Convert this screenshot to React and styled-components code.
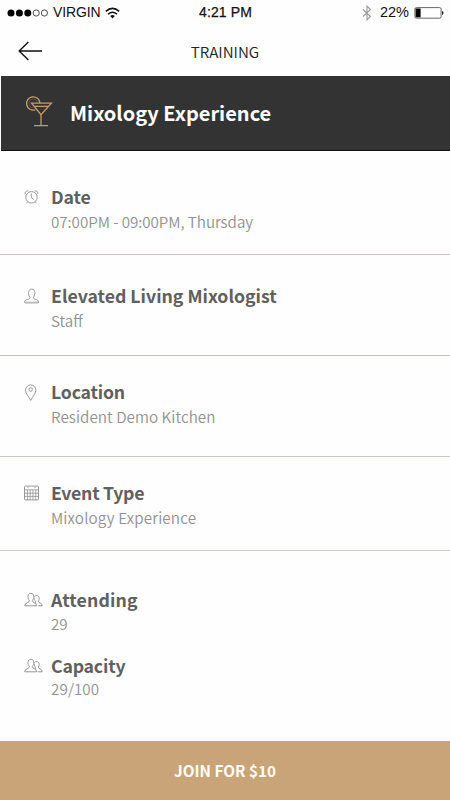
import React from 'react';
import styled, { createGlobalStyle } from 'styled-components';

const GlobalStyle = createGlobalStyle`
  * { box-sizing: border-box; }
  body { margin: 0; background: #fefefe; }
`;

const Screen = styled.main`
  display: flex;
  flex-direction: column;
  width: 450px;
  height: 800px;
  overflow: hidden;
  background: #fefefe;
  font-family: "Noto Sans CJK SC", "Noto Sans", sans-serif;
  svg { display: block; flex: none; }
`;

const StatusBar = styled.header`
  display: grid;
  grid-template-columns: 1fr auto 1fr;
  align-items: center;
  height: 25px;
  padding: 0 6px 0 7px;
  color: #111;
  font: 14px/25px "Liberation Sans", sans-serif;
`;

const StatusGroup = styled.div`
  display: flex;
  align-items: center;
  justify-content: ${(p) => (p.$end ? 'flex-end' : 'flex-start')};
  gap: ${(p) => p.$gap}px;
`;

const Carrier = styled.span`
  letter-spacing: -0.1px;
`;

const Clock = styled.time`
  letter-spacing: 0.1px;
  -webkit-text-stroke: 0.25px #111;
`;

const Percent = styled.span`
  font-size: 14.5px;
  margin: 0 5px 0 8px;
`;

const NavBar = styled.nav`
  display: grid;
  grid-template-columns: 1fr auto 1fr;
  align-items: center;
  height: 51px;
  padding: 0 18px;
`;

const BackButton = styled.button`
  justify-self: start;
  padding: 0;
  border: 0;
  background: none;
`;

const NavTitle = styled.h1`
  margin: 0;
  color: #222;
  font-size: 15.2px;
  font-weight: 350;
  line-height: 24px;
`;

const Banner = styled.section`
  display: flex;
  align-items: center;
  height: 75px;
  margin-left: 1px;
  padding-left: 24px;
  gap: 17px;
  background: #333;
  border-bottom: 1px solid #111;
`;

const BannerTitle = styled.h2`
  margin: 0;
  color: #fff;
  font-size: 20px;
  font-weight: 700;
  line-height: 30px;
`;

const Section = styled.section`
  display: flex;
  flex-direction: column;
  gap: 17px;
  height: ${(p) => p.$height}px;
  padding-top: ${(p) => p.$top}px;
  border-bottom: ${(p) => (p.$line ? `1px solid ${p.$line}` : '0')};
`;

const Row = styled.div`
  display: grid;
  grid-template-columns: 51px 1fr;
`;

const IconSlot = styled.div`
  padding: 5px 0 0 23px;
`;

const Label = styled.h3`
  margin: 0;
  color: #606060;
  font-size: 17.7px;
  font-weight: 700;
  line-height: 26px;
  letter-spacing: ${(p) => p.$tracking || 0}px;
`;

const Value = styled.p`
  margin: 0;
  color: #929292;
  font-size: 15.2px;
  font-weight: 350;
  line-height: ${(p) => (p.$compact ? 23 : 24)}px;
  margin-top: ${(p) => (p.$compact ? -0.5 : 0)}px;
  letter-spacing: ${(p) => p.$tracking || 0}px;
`;

const JoinButton = styled.button`
  flex: none;
  height: 59px;
  margin-top: auto;
  padding: 0 0 2px;
  border: 0;
  background: #c8a478;
  color: #fffdf8;
  font: 700 15.3px/24px "Noto Sans CJK SC", "Noto Sans", sans-serif;
`;

const lineProps = { fill: 'none', stroke: '#8c8c8c', strokeWidth: 0.9, strokeLinejoin: 'round' };

const SignalDots = () => (
  <svg width="42" height="10" viewBox="0 0 42 10">
    {[4, 12.4, 20.8, 29.2, 37.4].map((x, i) => (
      <circle key={x} cx={x} cy="5" r={i < 3 ? 3.5 : 3.1} fill={i < 3 ? '#000' : 'none'} stroke={i < 3 ? 'none' : '#222'} strokeWidth="0.8" />
    ))}
  </svg>
);

const WifiIcon = () => (
  <svg width="15" height="12" viewBox="0 0 15 12">
    <path d="M0.8 4.4Q7.5-1.6 14.2 4.4M3 7.2Q7.5 3.2 12 7.2" fill="none" stroke="#111" strokeWidth="1.5" />
    <path d="M5.2 9Q7.5 7.2 9.8 9L7.5 11.4z" fill="#111" />
  </svg>
);

const BluetoothIcon = () => (
  <svg width="10" height="16" viewBox="0 0 10 16">
    <path d="M1 4.5L8.5 11.5 5 14.8V1.2L8.5 4.5 1 11.5" fill="none" stroke="#999" strokeWidth="1.1" />
  </svg>
);

const BatteryIcon = () => (
  <svg width="30" height="12" viewBox="0 0 30 12">
    <rect x="0.9" y="0.6" width="26.2" height="10.6" rx="1.5" fill="#fff" stroke="#555" strokeWidth="0.9" />
    <rect x="1.6" y="1.5" width="5" height="8.8" fill="#000" />
    <path d="M28 4Q29.5 4.3 29.5 5.9T28 7.9z" fill="#222" />
  </svg>
);

const BackArrow = () => (
  <svg width="25" height="20" viewBox="0 0 25 20">
    <path d="M24 10H1.5M10.4 1L1.2 10l9.2 9" fill="none" stroke="#111" strokeWidth="1.4" />
  </svg>
);

const CocktailIcon = () => (
  <svg width="28" height="34" viewBox="0 0 28 34" fill="none" stroke="#c69c66" strokeWidth="1.3">
    <path d="M10.3 13.9A6.7 6.7 0 1 1 15 7M6.6 7.2H26.4L16 18.7ZM9.5 10.3H23.5M16 18.5V29.6M9 29.6H23" />
    <path d="M8.3 11.4A4.2 4.2 0 1 1 12.3 6.4" strokeWidth="0.7" opacity="0.4" />
  </svg>
);

const AlarmIcon = () => (
  <svg width="17" height="17" viewBox="0 0 17 17" {...lineProps}>
    <circle cx="8.5" cy="9.3" r="5.7" />
    <path d="M8.3 5.6V9.5L10.8 11.5M4.7 13.7L3.6 15.2M12.3 13.7l1.1 1.5M2.2 6C1.5 4.2 3.5 2.4 5.3 3M14.8 6C15.5 4.2 13.5 2.4 11.7 3" />
  </svg>
);

const PersonIcon = () => (
  <svg width="17" height="17" viewBox="0 0 17 17" {...lineProps}>
    <path d="M7 10.2C4.9 8.2 4.6 2.1 8.7 2.1S12.5 8.2 10.4 10.2C9.9 13.1 15.6 11.5 15.6 15.2Q15.6 15.9 15 15.9H2.2Q1.6 15.9 1.6 15.2C1.6 11.5 7.5 13.1 7 10.2Z" />
    <path d="M1.8 14.7H15.4" strokeWidth="0.5" opacity="0.6" />
  </svg>
);

const PinIcon = () => (
  <svg width="17" height="18" viewBox="0 0 17 18" {...lineProps}>
    <path d="M7.7 17.4C5.8 13.2 2.5 10.8 2.5 7.1A5.2 5.2 0 0 1 12.9 7.1C12.9 10.8 9.6 13.2 7.7 17.4Z" />
    <circle cx="7.7" cy="6.5" r="1.8" />
  </svg>
);

const CalendarIcon = () => (
  <svg width="17" height="17" viewBox="0 0 17 17" {...lineProps}>
    <rect x="1.5" y="2.1" width="14" height="13.8" rx="1" />
    <path d="M1.5 5.8H15.5M1.5 9.2H15.5M1.5 12.4H15.5M4.4 5.8V15.9M7.2 5.8V15.9M10 5.8V15.9M12.8 5.8V15.9M5 2.8V4.2M12 2.8V4.2" strokeWidth="0.75" />
  </svg>
);

const PeopleIcon = () => (
  <svg width="21" height="17" viewBox="0 0 21 17" {...lineProps}>
    <path d="M6.4 9.4C4.3 7.4 4.2 2.3 7.9 2.3S11.5 7.4 9.4 9.4C9 12.2 13.7 11.1 13.7 14.8H1.7C1.7 11.1 6.8 12.2 6.4 9.4Z" />
    <path d="M11.3 5.5C14.2 3.1 17.8 5.7 15.4 10.2C15.2 12.4 19.2 11.4 19.2 14.8H14.9M12.4 12.1V10.2C11.5 9.1 11.2 7.8 11.3 6.8" />
  </svg>
);

const sections = [
  { height: 104, top: 32, line: '#ccc4c4', rows: [[AlarmIcon, 'Date', '07:00PM - 09:00PM, Thursday', -0.1, -0.05]] },
  { height: 101, top: 27, line: '#c9c0b8', rows: [[PersonIcon, 'Elevated Living Mixologist', 'Staff', 0, 0]] },
  { height: 101, top: 22, line: '#cacac4', rows: [[PinIcon, 'Location', 'Resident Demo Kitchen', -0.2, 0.05]] },
  { height: 94, top: 22, line: '#cfcdc6', rows: [[CalendarIcon, 'Event Type', 'Mixology Experience', -0.3, 0.15]] },
  { height: 190, top: 35, rows: [[PeopleIcon, 'Attending', '29', 0.15, 0, true], [PeopleIcon, 'Capacity', '29/100', -0.2, 0.1, true]] },
];

export default function App() {
  return (
    <Screen>
      <GlobalStyle />
      <StatusBar>
        <StatusGroup $gap={4}>
          <SignalDots />
          <Carrier>VIRGIN</Carrier>
          <WifiIcon />
        </StatusGroup>
        <Clock>4:21 PM</Clock>
        <StatusGroup $end $gap={0}>
          <BluetoothIcon />
          <Percent>22%</Percent>
          <BatteryIcon />
        </StatusGroup>
      </StatusBar>
      <NavBar>
        <BackButton aria-label="Back"><BackArrow /></BackButton>
        <NavTitle>TRAINING</NavTitle>
      </NavBar>
      <Banner>
        <CocktailIcon />
        <BannerTitle>Mixology Experience</BannerTitle>
      </Banner>
      {sections.map((s) => (
        <Section key={s.rows[0][1]} $height={s.height} $top={s.top} $line={s.line}>
          {s.rows.map(([Icon, label, value, tracking, valueTracking, compact]) => (
            <Row key={label}>
              <IconSlot><Icon /></IconSlot>
              <div>
                <Label $tracking={tracking}>{label}</Label>
                <Value $tracking={valueTracking} $compact={compact}>{value}</Value>
              </div>
            </Row>
          ))}
        </Section>
      ))}
      <JoinButton>JOIN FOR $10</JoinButton>
    </Screen>
  );
}
